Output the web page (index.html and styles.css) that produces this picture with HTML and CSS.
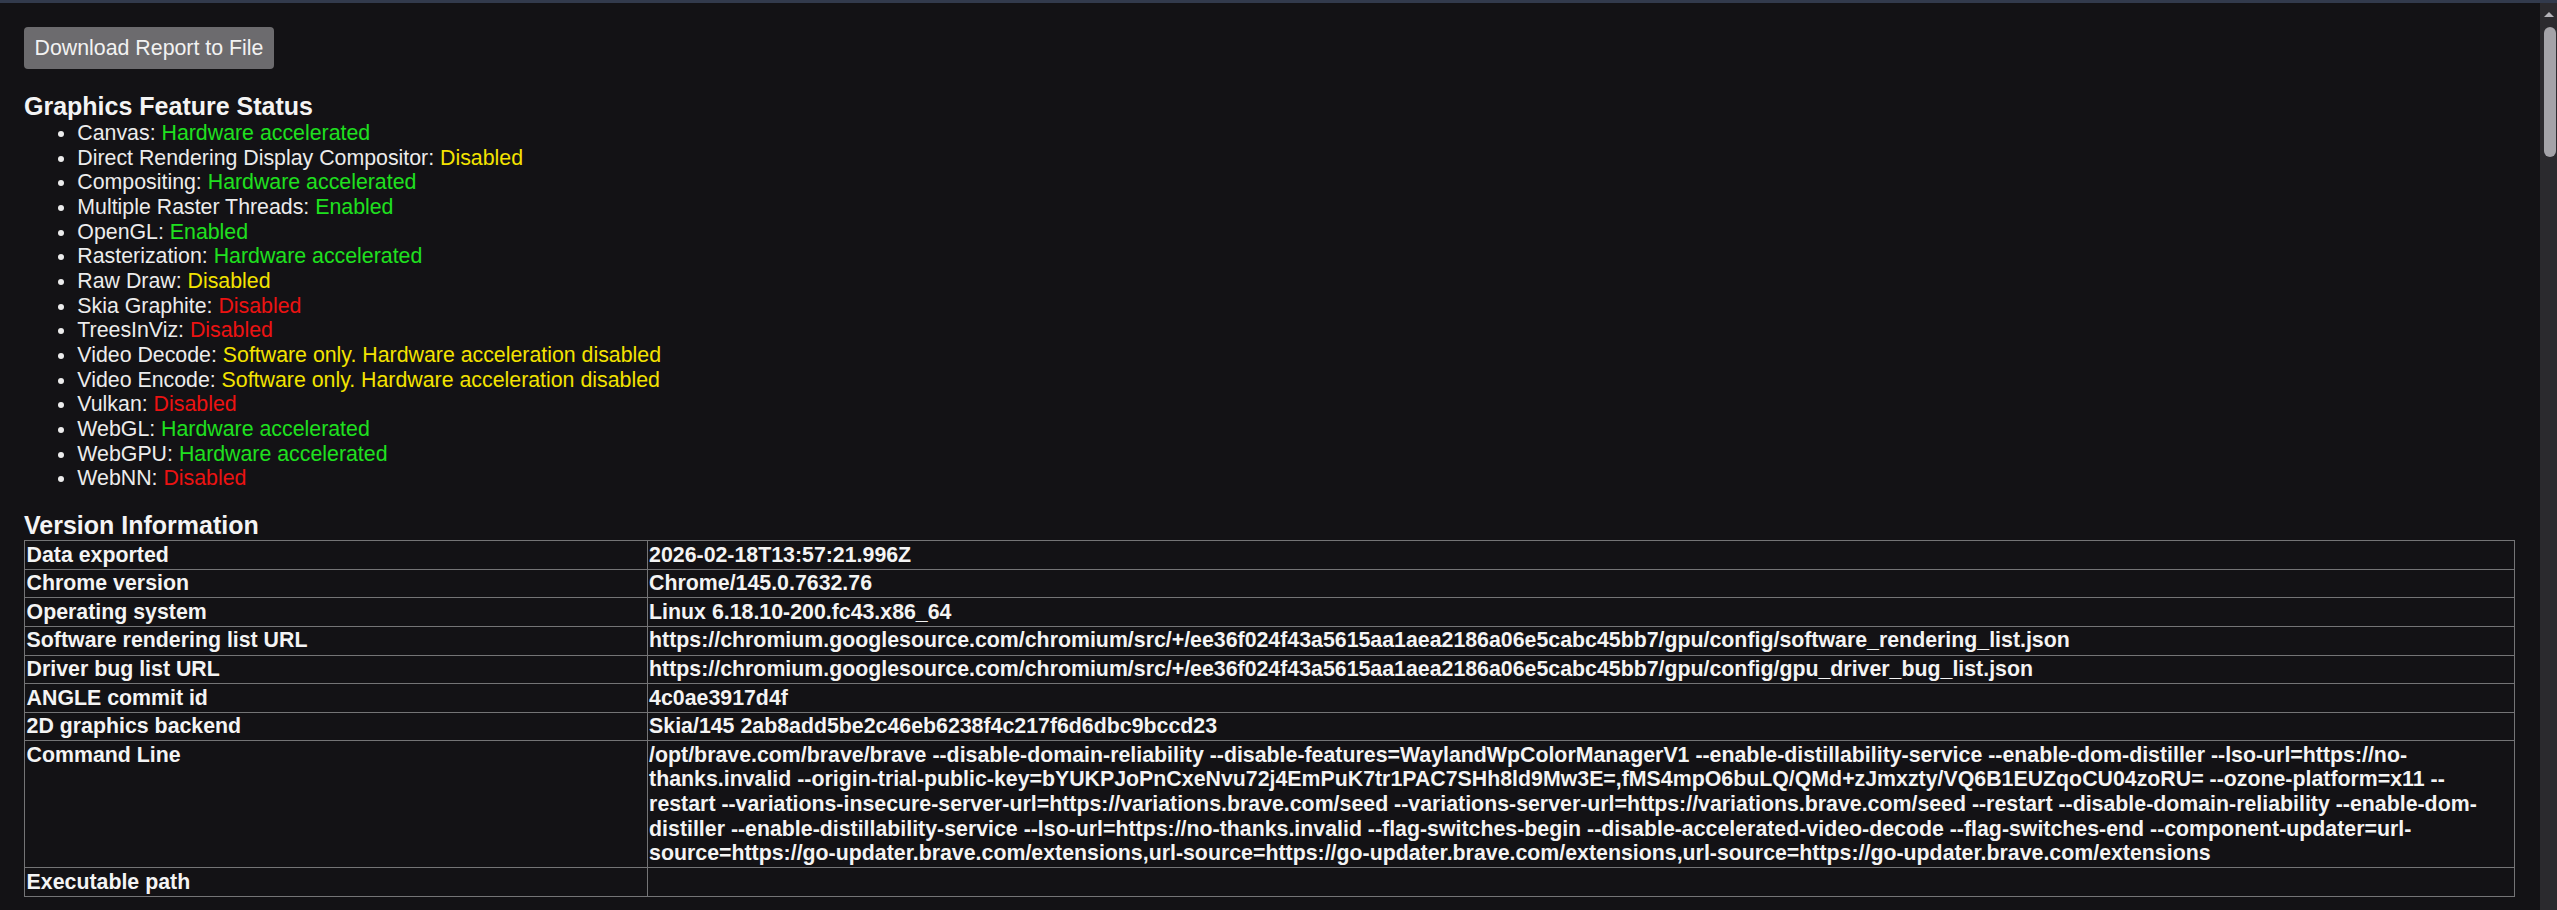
FILE: index.html
```html
<!DOCTYPE html>
<html lang="en">
<head>
<meta charset="utf-8">
<title>GPU Internals</title>
<link rel="stylesheet" href="styles.css">
</head>
<body>
<div class="topbar"></div>
<div class="shell">
  <main class="main">
    <button class="download-btn" type="button">Download Report to File</button>

    <h3 class="section-title first">Graphics Feature Status</h3>
    <ul class="feature-list">
      <li>Canvas: <span class="ok">Hardware accelerated</span></li>
      <li>Direct Rendering Display Compositor: <span class="warn">Disabled</span></li>
      <li>Compositing: <span class="ok">Hardware accelerated</span></li>
      <li>Multiple Raster Threads: <span class="ok">Enabled</span></li>
      <li>OpenGL: <span class="ok">Enabled</span></li>
      <li>Rasterization: <span class="ok">Hardware accelerated</span></li>
      <li>Raw Draw: <span class="warn">Disabled</span></li>
      <li>Skia Graphite: <span class="off">Disabled</span></li>
      <li>TreesInViz: <span class="off">Disabled</span></li>
      <li>Video Decode: <span class="warn">Software only. Hardware acceleration disabled</span></li>
      <li>Video Encode: <span class="warn">Software only. Hardware acceleration disabled</span></li>
      <li>Vulkan: <span class="off">Disabled</span></li>
      <li>WebGL: <span class="ok">Hardware accelerated</span></li>
      <li>WebGPU: <span class="ok">Hardware accelerated</span></li>
      <li>WebNN: <span class="off">Disabled</span></li>
    </ul>

    <h3 class="section-title">Version Information</h3>
    <table class="info-table">
      <tbody>
        <tr><td class="key">Data exported</td><td>2026-02-18T13:57:21.996Z</td></tr>
        <tr><td class="key">Chrome version</td><td>Chrome/145.0.7632.76</td></tr>
        <tr><td class="key">Operating system</td><td>Linux 6.18.10-200.fc43.x86_64</td></tr>
        <tr><td class="key">Software rendering list URL</td><td>https://chromium.googlesource.com/chromium/src/+/ee36f024f43a5615aa1aea2186a06e5cabc45bb7/gpu/config/software_rendering_list.json</td></tr>
        <tr><td class="key">Driver bug list URL</td><td>https://chromium.googlesource.com/chromium/src/+/ee36f024f43a5615aa1aea2186a06e5cabc45bb7/gpu/config/gpu_driver_bug_list.json</td></tr>
        <tr><td class="key">ANGLE commit id</td><td>4c0ae3917d4f</td></tr>
        <tr><td class="key">2D graphics backend</td><td>Skia/145 2ab8add5be2c46eb6238f4c217f6d6dbc9bccd23</td></tr>
        <tr><td class="key">Command Line</td><td class="cmd">/opt/brave.com/brave/brave --disable-domain-reliability --disable-features=WaylandWpColorManagerV1 --enable-distillability-service --enable-dom-distiller --lso-url=https://no-<br>thanks.invalid --origin-trial-public-key=bYUKPJoPnCxeNvu72j4EmPuK7tr1PAC7SHh8ld9Mw3E=,fMS4mpO6buLQ/QMd+zJmxzty/VQ6B1EUZqoCU04zoRU= --ozone-platform=x11 --<br>restart --variations-insecure-server-url=https://variations.brave.com/seed --variations-server-url=https://variations.brave.com/seed --restart --disable-domain-reliability --enable-dom-<br>distiller --enable-distillability-service --lso-url=https://no-thanks.invalid --flag-switches-begin --disable-accelerated-video-decode --flag-switches-end --component-updater=url-<br>source=https://go-updater.brave.com/extensions,url-source=https://go-updater.brave.com/extensions,url-source=https://go-updater.brave.com/extensions</td></tr>
        <tr><td class="key">Executable path</td><td></td></tr>
      </tbody>
    </table>
  </main>
  <div class="scrollbar" aria-hidden="true">
    <div class="scroll-arrow"></div>
    <div class="scroll-thumb"></div>
  </div>
</div>
</body>
</html>
```

FILE: styles.css
```css
html, body {
  margin: 0;
  padding: 0;
  height: 100%;
  overflow: hidden;
  background: #131215;
}

body {
  font-family: "Liberation Sans", Arial, sans-serif;
  font-size: 21.33px;
  color: #ececec;
  display: flex;
  flex-direction: column;
}

.topbar {
  height: 3px;
  flex: 0 0 3px;
  background: #323a4c;
}

.shell {
  flex: 1;
  display: flex;
  min-height: 0;
}

.main {
  flex: 1;
  min-width: 0;
  padding: 24.3px 25px 0 24px;
}

.download-btn {
  display: block;
  height: 42px;
  width: 250px;
  padding: 0;
  margin: 0;
  border: none;
  border-radius: 4px;
  background: #6c6b6e;
  color: #f2f2f2;
  font-family: "Liberation Sans", Arial, sans-serif;
  font-size: 21.33px;
  line-height: 42px;
  text-align: center;
}

.section-title {
  font-size: 25px;
  font-weight: bold;
  line-height: 28.7px;
  margin: 20.5px 0 0;
  color: #f4f4f4;
}

.section-title.first {
  margin-top: 22.9px;
}

.feature-list {
  margin: 0;
  padding-left: 53.33px;
  line-height: 24.67px;
}

.ok { color: #1fe01f; }
.warn { color: #f3e300; }
.off { color: #ec1212; }

.info-table {
  width: 100%;
  border-collapse: collapse;
  font-weight: bold;
  color: #f4f4f4;
  line-height: 24.6px;
}

.info-table td {
  border: 1px solid #747476;
  padding: 1.5px 1.6px;
  vertical-align: top;
}

.info-table td.key {
  width: 25%;
}

.info-table td.cmd {
  word-break: normal;
}

.scrollbar {
  flex: 0 0 17px;
  width: 17px;
  background: #2b2a2e;
  display: flex;
  flex-direction: column;
  align-items: center;
  padding-top: 9px;
  box-sizing: border-box;
}

.scroll-arrow {
  width: 0;
  height: 0;
  border-left: 5px solid transparent;
  border-right: 5px solid transparent;
  border-bottom: 5px solid #b4b3b8;
}

.scroll-thumb {
  margin-top: 10px;
  width: 12px;
  height: 130px;
  border-radius: 6px;
  background: #a4a3a8;
  align-self: flex-end;
  margin-right: 1px;
}
```
